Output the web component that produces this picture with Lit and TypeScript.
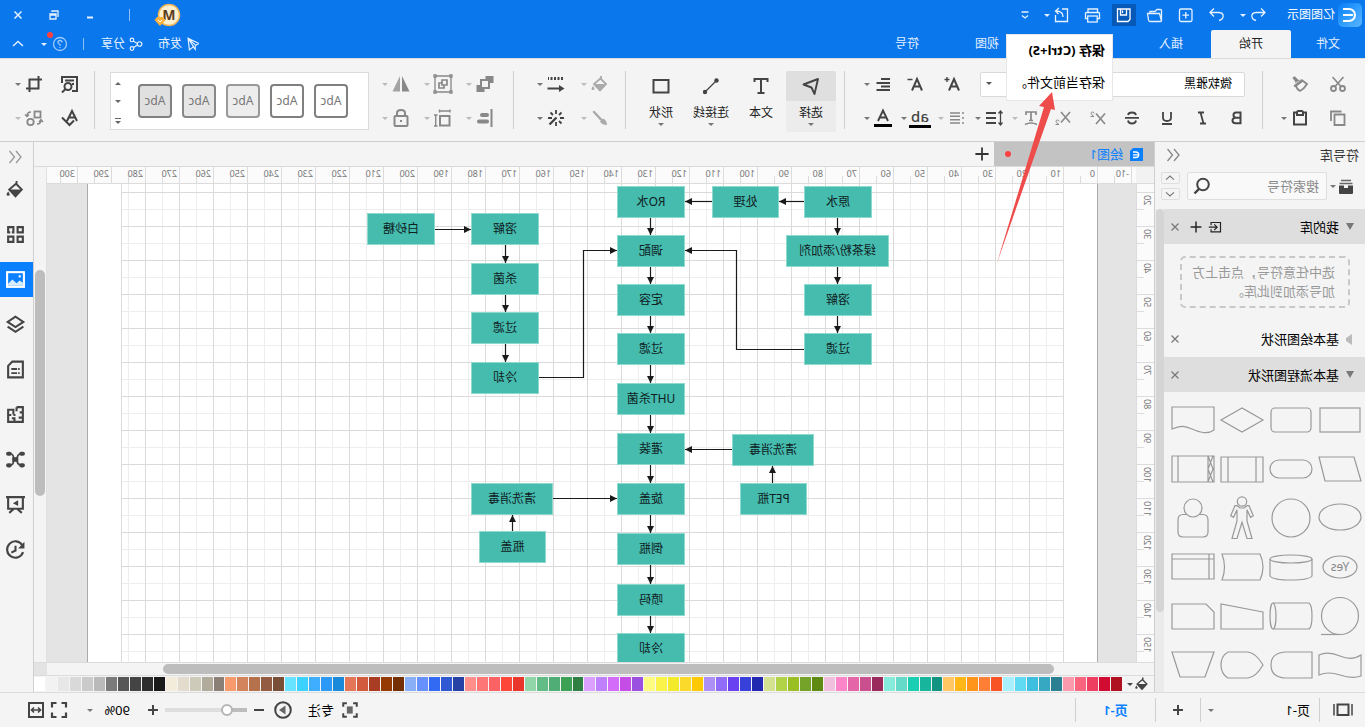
import { LitElement, html, svg, css, nothing, TemplateResult } from "lit";
import { customElement } from "lit/decorators.js";

const ico = (body: unknown, size = 20, box = 20) =>
  html`<svg class="ico" width=${size} height=${size} viewBox="0 0 ${box} ${box}" aria-hidden="true">${body}</svg>`;

const I: Record<string, TemplateResult> = {
  undo: svg`<path d="M7 3.5L3 7.5L7 11.5M3.5 7.5H12C18 8 17 14.500 12 15.500"/>`,
  redo: svg`<path d="M13 3.5L17 7.5L13 11.500M16.500 7.500H8C2 8 3 14.500 8 15.500"/>`,
  fresh: svg`<rect x="4" y="4" width="12.500" height="12.500" rx="1.500"/><path d="M10.200 7V13.500M7 10.200H13.500"/>`,
  open: svg`<path d="M3.500 16V5.500Q3.500 4.500 4.500 4.500H8L10 6.500H15V8.500M3.500 16L5.500 8.500H17.500L16.500 15Q16.300 16.500 15 16.500H4.500Q3.500 16.500 3.500 15.500"/>`,
  save: svg`<path d="M4.500 4H16.500V16.500H6L4 14.500V4Z"/><path d="M7.500 4V10H13.500V4M11.500 5.500V8"/>`,
  print: svg`<path d="M5.500 7.500V4H15V7.500M5.500 13.500H3.500V8.500Q3.500 7.500 4.500 7.500H16.500Q17.500 7.500 17.500 8.500V13.500H15.500"/><rect x="5.800" y="11" width="9.500" height="6"/>`,
  exp: svg`<path d="M10 4H4.500V16.500H16.500V10"/><path d="M9 12C9 8 11.500 6 16 6M13 3L16.500 6L13.500 9"/>`,
  more: svg`<path d="M6.500 7H13.500M7 10.500L10 13L13 10.500"/>`,
  min: svg`<path stroke-width="2" d="M7 12.500H13"/>`,
  restore: svg`<path d="M6 12V6H12V7M8 9H14V14H8ZM8 10H14" transform="translate(0 0)"/>`,
  close: svg`<path stroke-width="1.500" d="M6.500 6.500L13.500 13.500M13.500 6.500L6.500 13.500"/>`,
  send: svg`<path d="M3.500 9.500L15.500 3.500L14 16.500L9.500 13L15.500 3.500L7 11.500L3.500 9.500M7.500 12V16L9.500 13.500"/>`,
  share: svg`<circle cx="6" cy="10" r="2.500"/><circle cx="14.500" cy="5.500" r="2"/><circle cx="14.500" cy="15" r="2"/><path d="M8.500 9.500L11 8L13 6.500M8.500 11L12.700 14"/>`,
  help: svg`<circle cx="10" cy="10" r="6.500"/><path d="M8 8.500Q8 6.500 10 6.500T12 8.500Q12 9.500 10 10.500V12M10 13V14"/>`,
  up: svg`<path stroke-width="1.400" d="M5 12L10 7.500L15 12"/>`,
  cut: svg`<circle cx="5.500" cy="14.500" r="2.500" stroke-width="1.800"/><circle cx="14.500" cy="14.500" r="2.500" stroke-width="1.800"/><path stroke-width="1.600" d="M4.500 3L13 12.500M15.500 3L7 12.500"/>`,
  brush: svg`<path fill="currentColor" stroke="none" d="M11.500 6L15 2.500Q17 2 17.500 4L14.500 8L15.500 9.500L9 5.500ZM8 5L16.500 11.500L15 13.500L6 7Z"/><path stroke-width="1.800" d="M7 7L3 10Q6 15 10 17Q13 15.500 14 12"/>`,
  copy: svg`<path stroke-width="1.800" d="M17 13V3.500H6.500M3.500 6.500H13.500V17H3.500Z"/>`,
  paste: svg`<path stroke-width="2" d="M7 4.500H4V16.500H16V4.500H13M7 4.500Q7 3 8.500 3H11.500Q13 3 13 4.500V7H7Z"/>`,
  bold: svg`<path stroke-width="2" d="M6.500 4.500H11Q13.500 4.500 13.500 7T11 9.700H6.500ZM6.500 9.700H11.500Q14.500 9.700 14.500 12.500T11.500 15.300H6.500Z"/>`,
  italic: svg`<path stroke-width="1.800" d="M8 4.500H14M6 15.500H12M11.500 4.500L8.500 15.500"/>`,
  under: svg`<path stroke-width="1.800" d="M6 4V9.500Q6 13 10 13T14 9.500V4M5 16H15"/>`,
  strike: svg`<path stroke-width="1.800" d="M14 7Q13.500 4.500 10 4.500T6 7.200M6 12.500Q6.500 15.500 10 15.500T14 12.500M3 9.900H17"/>`,
  biggest: svg`<path stroke-width="2" d="M3 16.500L8 5L13 16.500M5 12.500H11"/><path stroke-width="1.400" d="M12.500 5.500H17.500M15 3V8"/>`,
  smaller: svg`<path stroke-width="2" d="M3 16.500L8 5L13 16.500M5 12.500H11"/><path stroke-width="1.500" d="M12.500 5.500H17.500"/>`,
  sup: svg`<path stroke-width="1.600" d="M2 5.500L11 16M11 5.500L2 16"/><path stroke-width="1" d="M13 5.500Q13 4 14.500 4T16 5.500Q16 6.500 13 8.500H16.500"/>`,
  sub: svg`<path stroke-width="1.600" d="M2 4L11 14.500M11 4L2 14.500"/><path stroke-width="1" d="M13 13.500Q13 12 14.500 12T16 13.500Q16 14.500 13 16.500H16.500"/>`,
  align: svg`<path stroke-width="2" d="M3 5H12M3 9H16.500M3 12.500H12M3 16H16.500"/>`,
  tcurve: svg`<path stroke-width="1.700" d="M5 7V4H15V7M10 4V12.500M8 12.500H12M4 16.500Q10 13.500 16 16.500"/>`,
  spacing: svg`<path stroke-width="2" d="M8 5H18M8 10H18M8 15H18"/><path stroke-width="1.300" d="M3.500 3V17M1.500 5.500L3.500 3L5.500 5.500M1.500 14.500L3.500 17L5.500 14.500"/>`,
  list: svg`<path stroke-width="1.500" d="M3 5H5M3 10H5M3 15H5M7 5H17M7 8.300H17M7 11.700H17M7 15H17"/>`,
  fontcol: svg`<path stroke-width="1.900" d="M5 13L10 2.500L15 13M7 9.500H13"/><path stroke="#000" stroke-width="3" d="M1 17.500H19"/>`,
  pointer: svg`<path stroke-width="1.900" stroke-linejoin="round" d="M17.500 8.500L3 3L6.500 18L9.500 11.500Z"/>`,
  text: svg`<path stroke-width="2" d="M3.500 6V3H16.500V6M10 3V17M6.500 17H13.500"/>`,
  conn: svg`<circle cx="16" cy="16" r="2.200" fill="currentColor" stroke="none"/><circle cx="4.500" cy="4.500" r="2.200" fill="currentColor" stroke="none"/><path d="M16 16L4.500 4.500"/>`,
  square: svg`<rect x="2.500" y="4" width="15" height="12.500" stroke-width="2"/>`,
  bucket: svg`<path stroke-width="1.800" d="M9 2V6M9 4L16 10L10 16.500L4 10L9.500 4.500"/><path fill="currentColor" stroke="none" d="M4 10H16.500L10 17Z"/><path fill="currentColor" stroke="none" d="M17 12Q20 16 17 16T17 12"/>`,
  linest: svg`<path stroke-width="3" stroke-dasharray="2 1.500" d="M3 4.500H18"/><path stroke-width="2" d="M5 14.500H18.500"/><path fill="currentColor" stroke="none" d="M7 11L1.500 14.500L7 18Z"/>`,
  pen: svg`<path stroke-width="2.500" stroke-linecap="round" d="M16 4L9 11.500"/><path fill="currentColor" stroke="none" d="M3 17Q3 12 7 10.500L10 13.500Q8 17 3 17"/>`,
  wand: svg`<path stroke-width="2.300" d="M9.500 9.500L16.500 16.500"/><path stroke-width="1.800" d="M10 2V6M10 14V18M2 10H6M14 10H18M4.500 4.500L7 7M15.500 4.500L13 7M4.500 15.500L7 13"/>`,
  layers: svg`<path fill="currentColor" stroke="none" d="M1.500 2H9.500V5H6V9H1.500ZM18.500 18H10.500V15H14V11H18.500Z"/><rect x="6" y="6" width="8" height="8" stroke-width="2"/>`,
  group: svg`<path d="M2 2H18V18H2Z"/><path stroke-width="1.700" d="M6 6H11V11H6ZM11 9H14V14H9V11"/><path fill="#f4f4f4" d="M1 1H3V3H1ZM17 1H19V3H17ZM1 17H3V19H1ZM17 17H19V19H17Z"/>`,
  mirror: svg`<path fill="currentColor" stroke="none" d="M9 2V17.500H1.500Z"/><path fill="currentColor" stroke="none" opacity=".75" d="M11 2V17.500H18.500Z"/>`,
  alignl: svg`<path stroke-width="2" d="M3.500 1V19"/><path stroke-width="4" stroke-linecap="round" d="M8 7H13M8 13.500H16"/>`,
  size: svg`<rect x="3.500" y="8" width="9.500" height="9.500" stroke-width="2"/><path stroke-width="1.400" d="M3 1.500V4.500M13.500 1.500V4.500M3 3H13.500M15.500 7H19M15.500 18H19M17.300 7V18"/>`,
  lock: svg`<rect x="3.500" y="8" width="13" height="10" rx="1" stroke-width="2"/><path stroke-width="2" d="M6 8V5Q6 2 10 2T14 5V8"/><path stroke-width="2" d="M9 13H11"/>`,
  find: svg`<path stroke-width="2" d="M8 17H3V3H18V9M6 6.500H15M6 10H8"/><circle cx="12" cy="12.500" r="3.500" stroke-width="2"/><path stroke-width="2" d="M14.500 15L18 18.500"/>`,
  crop: svg`<path stroke-width="2" d="M5.500 2V14.500H18M2 5.500H14.500V18"/>`,
  spell: svg`<path stroke-width="2" d="M3 13L8 3L13 13M5 9.500H11M6 12.500L10.500 17L18 9.500"/>`,
  swap: svg`<rect x="3.500" y="3.500" width="6" height="6" stroke-width="1.800"/><circle cx="13.500" cy="14" r="3.200" stroke-width="1.800"/><path stroke-width="1.400" d="M13 4Q17 4 17 8M15 6.500L17 8.500L19 6.500M3 12Q3 16 7 16M1 14L3 11.500L5 14"/>`,
  tray: svg`<path fill="currentColor" stroke="none" d="M3 9.500H8V12H12V9.500H17V17Q17 18 16 18H4Q3 18 3 17Z"/><path stroke-width="1.500" opacity=".8" d="M3.500 7.500H16.500M5 4.500H15"/>`,
  magnify: svg`<circle cx="9" cy="8.500" r="5.800" stroke-width="2"/><path stroke-width="2.400" d="M13 12.800L17.500 17.500"/>`,
  imp: svg`<path stroke-width="1.300" d="M15.500 8V5H5V15.500H15.500V12.500M18 10.200H9M12 7L8.700 10.200L12 13.500"/>`,
  plus: svg`<path stroke-width="1.600" d="M10 4V16M4 10H16"/>`,
  x: svg`<path stroke-width="1.200" d="M6.500 6.500L13.500 13.500M13.500 6.500L6.500 13.500"/>`,
  dleft: svg`<path stroke-width="1.300" d="M9 4L4 10L9 16M15.500 4L10.500 10L15.500 16"/>`,
  apps: svg`<path stroke-width="2" d="M3 3H8V8H3ZM3 12H8V17H3ZM12 12H17V17H12Z"/><path stroke-width="2" d="M12 3H17V8H12Z" stroke-dasharray="12 1.500"/>`,
  image: svg`<rect x="2" y="3" width="16" height="14" stroke-width="2"/><path fill="currentColor" stroke="none" opacity=".85" d="M3 16V13L6 11L9 13.500L13 10L17 14V16Z"/><rect x="5" y="6" width="2" height="2" fill="currentColor" stroke="none"/>`,
  stack: svg`<path stroke-width="1.900" d="M10 2.500L17.500 7.500L10 12.500L2.500 7.500ZM2.500 12L10 17L17.500 12"/>`,
  page: svg`<path stroke-width="2" d="M3 2.500H13L17 6.500V17.500H3Z"/><path stroke-width="1.800" d="M6 9.500H7.500M8.500 9.500H14M6 13.500H7.500M8.500 13.500H14"/>`,
  floor: svg`<path stroke-width="2" d="M9 3H3V17H17V5.500H12V10M9 3V7M3 8H6M12 10.500H10M17 10.500H14M3 13H7M11 17V13.500H13.500"/>`,
  mind: svg`<rect x="8" y="8.500" width="4.500" height="3" fill="currentColor"/><path stroke-width="1.600" d="M5 4.500Q8 5 8.500 8.500M15 4.500Q12 5 11.800 8.500M5 15.500Q8 15 8.500 11.500M15 15.500Q12 15 11.800 11.500"/><path stroke-width="4" stroke-linecap="round" d="M3 4.500H4.500M15.500 4.500H17M3 15.500H4.500M15.500 15.500H17"/>`,
  present: svg`<path stroke-width="2" d="M1 3H19M3 3V14H17V3M8 14.500L4 18M12 14.500L16 18"/><path fill="currentColor" stroke="none" d="M7.500 6L12.500 8.800L7.500 11.500Z"/>`,
  history: svg`<path stroke-width="2" d="M3.500 6A7.800 7.800 0 1 1 2.800 12.500M10 6.500V11L14 13"/><path fill="currentColor" stroke="none" d="M1.500 2.500V9H7.500Z"/>`,
  pages: svg`<rect x="4.500" y="4.500" width="11" height="10.500" stroke-width="2"/><path stroke-width="1.500" d="M1 4V15.500M19 4V15.500"/>`,
  focus: svg`<path stroke-width="2.200" d="M2.500 6.500V2.500H6.500M13.500 2.500H17.500V6.500M17.500 13.500V17.500H13.500M6.500 17.500H2.500V13.500"/><rect x="7" y="6" width="6.500" height="8" fill="#666" stroke="none"/>`,
  play: svg`<circle cx="10" cy="10" r="7.800" stroke-width="2"/><path fill="#666" stroke="none" d="M7.500 5.500L14 10L7.500 14.500Z"/>`,
  minus: svg`<path stroke-width="2" d="M5 10H15"/>`,
  plusb: svg`<path stroke-width="2.200" d="M10 4.500V15.500M4.500 10H15.500"/>`,
  full: svg`<path stroke-width="2.200" d="M3 7.500V3H7.500M12.500 3H17V7.500M17 12.500V17H12.500M7.500 17H3V12.500"/>`,
  fitw: svg`<rect x="3" y="3" width="14" height="14" stroke-width="2"/><path stroke-width="1.600" d="M5.500 10H14.500M8 7.500L5.500 10L8 12.500M12 7.500L14.500 10L12 12.500"/>`,
};

const shapes: TemplateResult[] = [
  svg`<rect x="4" y="12" width="40" height="24"/>`,
  svg`<rect x="4" y="12" width="40" height="24" rx="4"/>`,
  svg`<path d="M24 12L45 24L24 36L3 24Z"/>`,
  svg`<path d="M3 11H45V33C36 29 32 30 25 33S10 39 3 34Z"/>`,
  svg`<path d="M10 12H45L39 36H3Z"/>`,
  svg`<rect x="3" y="15" width="42" height="18" rx="9"/>`,
  svg`<path d="M3 12H45V37H3ZM10 12V37M38 12V37"/>`,
  svg`<path d="M3 11H45V37H3ZM9 11V37M39 11V37M4 11L9 24L4 37M9 11L4 24L9 37"/>`,
  svg`<ellipse cx="24" cy="23" rx="21" ry="13"/>`,
  svg`<circle cx="24" cy="24" r="19"/>`,
  svg`<circle cx="24" cy="7.500" r="4.700"/><path d="M22 14L19 11.700H17L12.700 21.700L15.500 23.300L19 15.700V27L14 44.500H19L24 28.300L29 44.500H34L29 27V15.700L32.500 23.300L35.300 21.700L31 11.700H29L26 14Z"/>`,
  svg`<circle cx="24" cy="14" r="9"/><path d="M18 20.500H14Q9 20.500 9 26V38Q9 43 14 43H34Q39 43 39 38V26Q39 20.500 34 20.500H30"/>`,
  svg`<ellipse cx="24" cy="24" rx="17" ry="11"/><text x="24" y="28" text-anchor="middle">Yes</text>`,
  svg`<ellipse cx="24" cy="16" rx="21" ry="4"/><path d="M3 16V33Q6 37 24 37T45 33V16"/>`,
  svg`<path d="M6 11H44Q39 24 44 37H6Q0 24 6 11Z"/>`,
  svg`<path d="M3 11H45V36H3ZM3 16H45M8 11V36"/>`,
  svg`<circle cx="24" cy="24" r="18.500"/><path d="M24 42.500H43"/>`,
  svg`<ellipse cx="42" cy="24" rx="3" ry="13"/><path d="M42 11H6Q3 13 3 24T6 37H42"/>`,
  svg`<path d="M3 20L45 12V37H3Z"/>`,
  svg`<path d="M11 12H45V37H3V20Z"/>`,
  svg`<path d="M3 14Q12 20 24 15T45 14V34Q36 30 24 34T3 35Z"/>`,
  svg`<path d="M3 11H30Q44 12 44 24T30 37H3Z"/>`,
  svg`<path d="M3 24Q10 12 18 11H38Q45 15 45 24T38 37H18Q10 36 3 24Z"/>`,
  svg`<path d="M3 11H45L37 36H12Z"/>`,
];

const palette =
  "b01120 d00c33 ee3f60 f9647f fa9aac 2a7f90 37a8c2 3fbfdf 5fdaf2 a8f0ff f75324 ff7f37 ff951a ffb718 ffc663 129480 16b59c 19ceb2 66dac8 85ecdb 9b2a5c c94f8f e465a8 fb85c8 f0bfdb 5e8a12 75a228 9abf23 b2d248 d3e190 2129b0 3741d9 6a41f0 916cf8 ac90f5 fec900 fcda2b f2ea2a faf44a fefc80 9b50e0 c44de6 d36cf8 bf80fe dba0fe 2f7f43 3da155 50ad75 62bc85 90d6a9 e8372a fd4738 fa6264 ff7676 ff8f88 2642a5 2f58d2 336af3 6790ff 89b0f6 742f03 963a03 a93d23 d25b3e e47758 1989da 2b99f5 40aeff 3dd1ff 67e3ff 794e36 935b41 b4714c d4845d f79a6c 8a8076 b0ab9a cdcab9 e3dccc f4ecda 1a1a1a 2e2e2e 444444 575757 7a7a7a bababa cacaca d9d9d9 e7e7e7 f2f2f2 ffffff".split(" ");

// left, top, width, label
const nodes: [number, number, number, string][] = [
  [264, 2, 68, "原水"], [357, 2, 67, "处理"], [451, 2, 68, "RO水"],
  [247, 51, 103, "绿茶粉/添加剂"], [264, 100, 68, "溶解"], [264, 149, 68, "过滤"],
  [451, 51, 68, "调配"], [451, 100, 68, "定容"], [451, 149, 68, "过滤"],
  [451, 199, 68, "UHT杀菌"], [451, 249, 68, "灌装"], [451, 299, 68, "旋盖"],
  [451, 349, 68, "倒瓶"], [451, 400, 68, "喷码"], [451, 449, 68, "冷却"],
  [322, 250, 82, "清洗消毒"], [329, 299, 67, "PET瓶"],
  [701, 29, 68, "白砂糖"], [597, 29, 68, "溶解"], [597, 79, 68, "杀菌"],
  [597, 128, 68, "过滤"], [597, 178, 68, "冷却"],
  [583, 299, 82, "清洗消毒"], [590, 347, 67, "瓶盖"],
];

const links = [
  "M332 17.500H357", "M424 17.500H451", "M298.500 33V51", "M298.500 83V100", "M298.500 132V149",
  "M485.500 33V51", "M485.500 83V100", "M485.500 132V149", "M485.500 181V199", "M485.500 231V249",
  "M485.500 281V299", "M485.500 331V349", "M485.500 381V400", "M485.500 432V449",
  "M332 165.500H399.500V66.500H451", "M404 265.500H451", "M363.500 299V282",
  "M701 45.500H665", "M630.500 61V79", "M630.500 111V128", "M630.500 160V178",
  "M597 193.500H552.500V66.500H519", "M583 314.500H519", "M623.500 347V331",
];

const range = (a: number, b: number) => Array.from({ length: (b - a) / 10 + 1 }, (_, i) => a + i * 10);

@customElement("app-root")
export class AppRoot extends LitElement {
  static styles = css`
    :host {
      display: flex; flex-direction: column; position: relative;
      height: 100vh; overflow: hidden; transform: scaleX(-1);
      background: #f4f4f4; color: #222;
      font: 13px/18px "Noto Sans", "Noto Sans CJK SC", sans-serif;
    }
    * { box-sizing: border-box; }
    button, select, input { font: inherit; color: inherit; margin: 0; }
    button { display: flex; align-items: center; justify-content: center; padding: 0; border: 0; background: none; flex: none; }
    a { color: inherit; text-decoration: none; }
    .ico { display: block; flex: none; fill: none; stroke: currentColor; stroke-width: 1.3; overflow: visible; }
    .caret { flex: none; display: block; width: 0; height: 0; border: 3px solid transparent; border-top-color: currentColor; border-bottom: 0; }
    .row { display: flex; align-items: center; }
    .push { margin-left: auto; }

    .head { background: #0a77ec; color: #e6f1ff; font-size: 12px; }
    .title { height: 30px; padding-left: 3px; gap: 7px; }
    .logo { display: block; }
    .brand { margin: 0 10px 0 -4px; color: #fff; }
    .tb { width: 24px; height: 22px; }
    .pair { width: 34px; }
    .save { background: #0759b8; color: #fff; border-radius: 1px; }
    .win { gap: 0; align-self: stretch; }
    .wbtn { width: 36px; height: 28px; }
    .avatar { display: block; margin-right: 24px; }
    .bar { width: 1px; height: 12px; background: #8fc1f7; }
    .win .bar { margin-right: 21px; }
    .tabs { height: 28px; align-items: stretch; }
    .tab { width: 80px; display: flex; align-items: center; justify-content: center; }
    .tab.first { width: 74px; }
    .tab.on { background: #f4f4f4; color: #222; border-radius: 2px 2px 0 0; }
    .tab.gap { margin-left: 104px; }
    .acts { color: #e6f1ff; }
    .act { gap: 2px; margin-right: 13px; }
    .acts .bar { margin: 0 13px 0 4px; }
    .help { position: relative; width: 34px; justify-content: flex-start; gap: 3px; color: #9bc9fb; }
    .help .caret { color: #e6f1ff; }
    .dot { position: absolute; left: 17px; top: -2px; width: 6px; height: 6px; border-radius: 50%; background: #ff4040; }

    .ribbon { display: flex; height: 84px; border-top: 1px solid #dcdcdc; border-bottom: 1px solid #cfcfcf; padding-top: 12px; color: #444; }
    .grp { display: flex; flex-direction: column; gap: 8px; flex: none; }
    .line { display: flex; align-items: center; height: 26px; }
    .sep { flex: none; width: 1px; height: 58px; background: #cfcfcf; }
    .tool { height: 26px; justify-content: flex-start; }
    .tool .face { width: 22px; display: flex; justify-content: center; }
    .tool .caret { margin-left: 2px; color: #777; }
    .g { color: #888; } .d { color: #aaa; }
    .tool.g .caret, .tool.d .caret { color: #bbb; }
    .w38 { width: 38px; } .w37 { width: 37px; } .w44 { width: 44px; } .w42 { width: 42px; } .w36 { width: 36px; }
    .w35 { width: 35px; justify-content: center; } .mid { justify-content: center; }
    .g1 { padding: 0 10px 0 16px; } .g2 { padding: 0 12px 0 7px; } .g4 { padding: 0 9px 0 14px; }
    .g5 { padding: 0 1px 0 17px; } .g6 { padding-left: 13px; }
    .tail { padding-left: 3px; display: flex; }
    .combo { position: relative; height: 25px; margin: 0 6px 0 10px; display: flex; }
    .sel { appearance: none; height: 25px; border: 1px solid #d9d9d9; background: #fff; border-radius: 2px; color: #000; font-size: 12px; line-height: 18px; }
    .fam { width: 180px; padding: 0 12px; } .num { width: 80px; margin-left: 5px; }
    .combo .caret { position: absolute; right: 6px; top: 10px; color: #555; }
    .ab { font-size: 15px; line-height: 16px; font-weight: 500; border-bottom: 3px solid #000; height: 20px; }
    .g3 { display: flex; padding: 0 10px 0 8px; }
    .big { width: 50px; height: 61px; flex-direction: column; font-size: 12px; justify-content: flex-start; border-radius: 2px; overflow: hidden; color: #222; white-space: nowrap; }
    .big .top { height: 30px; align-self: stretch; display: flex; align-items: center; justify-content: center; color: #444; }
    .big .lbl { height: 22px; line-height: 24px; }
    .big .caret { color: #777; }
    .big.on { background: #ececec; } .big.on .top { background: #dfdfdf; }
    .gallery { width: 259px; height: 58px; margin: 1px 15px 0 0; padding-left: 20px; display: flex; align-items: center; gap: 10px; background: #fff; border: 1px solid #dcdcdc; flex: none; }
    .style { width: 34px; height: 34px; border: 2px solid #808080; border-radius: 4px; background: #fff; font-size: 12px; color: #777; }
    .style.s3 { background: #ededed; border-color: #999; } .style.s4 { background: #e6e6e6; border-color: #888; } .style.s5 { background: #e0e0e0; }
    .spin { margin-left: auto; width: 15px; height: 46px; padding-top: 4px; display: flex; flex-direction: column; justify-content: space-between; align-items: center; color: #666; }
    .flip { transform: scaleY(-1); }
    .bottom { border-top: 1px solid #666; padding-top: 2px; }

    .body { flex: 1; min-height: 0; display: grid; grid-template-columns: 211px 1fr 34px; }
    .lib { border-right: 1px solid #cfcfcf; display: flex; flex-direction: column; min-width: 0; min-height: 0; }
    .libhead { height: 26px; padding: 0 8px 0 6px; color: #333; }
    .libhead button { color: #888; width: 20px; }
    .find { height: 41px; padding: 4px 6px 9px 9px; color: #444; }
    .find > .caret { color: #777; }
    .search { flex: 1; min-width: 0; display: flex; align-items: center; height: 28px; margin: 0 7px 0 3px; border: 1px solid #dedede; border-radius: 2px; background: #f9f9f9; padding: 0 4px 0 7px; }
    .search input { flex: 1; width: 0; min-width: 0; border: 0; padding: 0; background: none; outline: 0; }
    .search input::placeholder { color: #8a8a8a; opacity: 1; }
    .step { display: flex; flex-direction: column; gap: 4px; }
    .step button { width: 19px; height: 12px; border: 1px solid #dedede; border-radius: 2px; color: #777; overflow: hidden; }
    .scroll { flex: 1; min-height: 0; display: flex; overflow: hidden; }
    .sections { flex: 1; min-width: 0; }
    .track { width: 9px; background: #ebebeb; }
    .thumb { height: 403px; width: 8px; background: #d5d5d5; border-radius: 4px; }
    .sect { display: flex; align-items: center; height: 36px; padding: 0 0 0 11px; color: #000; }
    .sect.dark { background: #dedede; height: 35px; }
    .tri { width: 0; height: 0; border: 4px solid transparent; border-top: 7px solid #777; border-bottom: 0; margin-right: 7px; }
    .tri.side { border: 4px solid transparent; border-left: 6px solid #bbb; border-right: 0; margin: 0 7px 0 2px; }
    .sect .push { display: flex; }
    .sect button { width: 20px; color: #222; } .sect .x { color: #777; width: 22px; }
    .drop { width: 170px; height: 52px; margin: 12px 15px 13px; border: 2px dashed #c8c8c8; border-radius: 5px; padding: 5px 8px 0 13px; color: #999; line-height: 19px; }
    .shapes { display: grid; grid-template-columns: repeat(4, 49px); grid-auto-rows: 49px; padding: 4px 0 0 1px; }
    .shapes svg { fill: none; stroke: #999; stroke-width: 1.200; }
    .shapes text { fill: #888; stroke: none; font-size: 12px; }

    .main { display: flex; flex-direction: column; min-width: 0; min-height: 0; }
    .files { height: 25px; border-bottom: 1px solid #dadada; flex: none; }
    .file { width: 160px; height: 24px; background: #c3c3c3; padding: 0 11px; color: #0a80ff; gap: 7px; }
    .red { width: 6px; height: 6px; border-radius: 50%; background: #ff4040; }
    .files button { width: 24px; color: #333; }
    .work { flex: 1; min-height: 0; display: grid; grid-template: 17px 1fr / 18px 1fr 13px; }
    .corner { background: #f2f2f2; border-bottom: 1px solid #dcdcdc; }
    .hr { display: flex; overflow: hidden; padding-left: 4px; background: #fbfbfb; border-bottom: 1px solid #dcdcdc; font-size: 9px; line-height: 14px; color: #777; }
    .hr span { flex: none; width: 34px; padding-left: 2px; border-left: 1px solid #dcdcdc; background: linear-gradient(#dcdcdc, #dcdcdc) 16px 100% / 1px 7px no-repeat; }
    .vr { overflow: hidden; padding-top: 8px; background: #fbfbfb; border-right: 1px solid #dcdcdc; font-size: 9px; line-height: 14px; color: #777; }
    .vr span { display: block; height: 34px; padding: 2px 0 0; border-top: 1px solid #dcdcdc; background: linear-gradient(#dcdcdc, #dcdcdc) 100% 16px / 7px 1px no-repeat; }
    .vr b { display: block; width: 14px; height: fit-content; font-weight: 400; writing-mode: vertical-rl; transform: rotate(180deg); }
    .canvas { position: relative; overflow: hidden; background: #e4e4e4; }
    .sheet { position: absolute; left: 38px; top: 0; bottom: 0; width: 1011px; background: #fff; border: solid #aaa; border-width: 0 1px; }
    .grid { position: absolute; left: 72px; top: 0; bottom: 0; width: 943px; border-right: 1px solid #dcdcdc;
      background:
        linear-gradient(90deg, #dadada 1px, transparent 1px) 0 0 / 34px 34px,
        linear-gradient(#dadada 1px, transparent 1px) 0 8px / 34px 34px,
        linear-gradient(90deg, #eee 1px, transparent 1px) 17px 0 / 34px 34px,
        linear-gradient(#eee 1px, transparent 1px) 0 25px / 34px 34px; }
    .wires { position: absolute; inset: 0; width: 100%; height: 100%; fill: none; stroke: #1a1a1a; stroke-width: 1.200; }
    .node { position: absolute; height: 32px; display: flex; align-items: center; justify-content: center; background: #45bcae; border: 1px solid #8fdacf; font-size: 12px; color: #10201e; white-space: nowrap; }
    .vs { grid-row: 1 / 3; grid-column: 3; border-left: 1px solid #e0e0e0; padding: 103px 1px 0; }
    .vs i { display: block; width: 10px; height: 226px; border-radius: 5px; background: #bdbdbd; }
    .hs { flex: none; display: flex; justify-content: space-between; height: 14px; border: solid #dcdcdc; border-width: 1px 0; }
    .hs i { width: 891px; height: 10px; margin: 1px 0 0 100px; border-radius: 5px; background: #bdbdbd; }
    .hs b { width: 13px; background: #e3e3e3; }
    .colors { flex: none; display: flex; height: 16px; padding: 1px 0; }
    .pick { width: 32px; color: #444; gap: 1px; padding-left: 4px; justify-content: flex-start; overflow: visible; }
    .sw { flex: 1; display: grid; grid-template-columns: repeat(91, 1fr); gap: 1px; }

    .side { border-left: 1px solid #cfcfcf; display: flex; flex-direction: column; color: #444; padding-top: 3px; }
    .side button { height: 35px; margin-bottom: 10px; padding-left: 2px; }
    .side .fold { height: 24px; margin-bottom: 3px; color: #999; }
    .side .on { background: #0a80ff; color: #fff; }

    .status { flex: none; height: 35px; border-top: 1px solid #dcdcdc; color: #444; }
    .status .v { width: 1px; height: 24px; background: #d0d0d0; }
    .pv { width: 45px; padding-right: 2px; }
    .pgs { appearance: none; border: 0; background: none; width: 70px; padding: 0 0 0 9px; color: #000; }
    .pgwrap { width: 118px; gap: 35px; } .pgwrap .caret { color: #777; }
    .add { width: 44px; } .pg { width: 79px; text-align: center; color: #0a80ff; font-weight: 600; }
    .zoomer { color: #444; padding-right: 26px; }
    .foc { gap: 7px; color: #000; margin-right: 15px; } .foc .ico { color: #444; }
    .pm { width: 20px; } .pm.out { margin-left: 4px; }
    .pct { width: 50px; padding-left: 13px; color: #000; } .zoomer .caret { color: #777; }
    .range { appearance: none; width: 82px; height: 12px; margin: 0 2px; background: linear-gradient(90deg, #bdbdbd 20px, #dedede 20px) 0 4px / 100% 4px no-repeat; border-radius: 2px; }
    .range::-webkit-slider-thumb { appearance: none; width: 12px; height: 12px; border-radius: 50%; background: #fff; border: 2px solid #b5b5b5; }
    .end { gap: 3px; margin-left: 18px; }

    .tip { position: absolute; left: 252px; top: 34px; width: 107px; height: 67px; background: #fff; border: 1px solid #e6e6e6; padding: 7px 0 0 7px; color: #000; white-space: nowrap; }
    .tip b { display: block; margin-bottom: 14px; line-height: 17px; }
    .mark { position: absolute; left: 300px; top: 85px; width: 80px; height: 185px; fill: #ee4b4b; }
  `;

  tool(name: string, cls = "", caret = false, label = name, size = 20) {
    return html`<button class="tool ${cls}" aria-label=${label}><span class="face">${ico(I[name], size)}</span>${caret ? html`<span class="caret"></span>` : nothing}</button>`;
  }

  big(name: string, label: string, caret = true, on = false) {
    return html`<button class="big ${on ? "on" : ""}"><span class="top">${ico(I[name])}</span><span class="lbl">${label}</span>${caret ? html`<span class="caret"></span>` : nothing}</button>`;
  }

  header() {
    const t = (n: string, c = "") => html`<button class="tb ${c}" aria-label=${n}>${ico(I[n])}</button>`;
    return html`<header class="head">
      <div class="row title">
        <svg class="logo" width="24" height="24" viewBox="0 0 24 24" aria-hidden="true">
          <defs><linearGradient id="lg" x1="1" y1="0" x2="0" y2="1"><stop offset="0" stop-color="#0a7cf5"/><stop offset=".5" stop-color="#2f9dff"/><stop offset="1" stop-color="#5ab4ff"/></linearGradient></defs>
          <rect width="24" height="24" rx="5" fill="url(#lg)"/>
          <path d="M19 6H13A6 6 0 0 0 13 18H19M9 12H19" fill="none" stroke="#fff" stroke-width="2"/>
        </svg>
        <span class="brand">亿图图示</span>
        <div class="row pair">${t("undo")}<span class="caret"></span></div>
        ${t("redo")}${t("fresh")}${t("open")}${t("save", "save")}${t("print")}
        <div class="row">${t("exp")}<span class="caret"></span></div>
        ${t("more")}
        <div class="row win push">
          <svg class="avatar" width="27" height="24" viewBox="0 0 27 24" role="img" aria-label="M">
            <circle cx="12" cy="12" r="10.500" fill="#fdf0cf" stroke="#f3b556" stroke-width="1.500"/>
            <text x="12" y="17" text-anchor="middle" font-size="14" font-weight="700" fill="#5c3d1e">M</text>
            <path d="M18 14H24L26.500 17L21 23L15.500 17Z" fill="#fbb03b"/><path d="M19 17L21 19L23 17" fill="none" stroke="#fff"/>
          </svg>
          <span class="bar"></span>
          <button class="wbtn" aria-label="min">${ico(I.min)}</button>
          <button class="wbtn" aria-label="restore">${ico(I.restore)}</button>
          <button class="wbtn" aria-label="close">${ico(I.close)}</button>
        </div>
      </div>
      <nav class="row tabs">
        <a class="tab first" href="#">文件</a><a class="tab on" href="#">开始</a><a class="tab" href="#">插入</a>
        <a class="tab gap" href="#">视图</a><a class="tab" href="#">符号</a>
        <div class="row acts push">
          <button class="act">${ico(I.send, 18)}发布</button>
          <button class="act">${ico(I.share, 18)}分享</button>
          <span class="bar"></span>
          <button class="help" aria-label="help">${ico(I.help, 20)}<span class="dot"></span><span class="caret"></span></button>
          <button class="wbtn" aria-label="fold">${ico(I.up)}</button>
        </div>
      </nav>
    </header>`;
  }

  ribbon() {
    return html`<div class="ribbon">
      <div class="grp g1">
        <div class="line">${this.tool("cut", "w38 g")}${this.tool("brush", "w38 g")}</div>
        <div class="line">${this.tool("copy", "w38 g")}${this.tool("paste", "w38", true)}</div>
      </div><span class="sep"></span>
      <div class="grp g2">
        <div class="line">
          <div class="combo">
            <select class="sel fam" aria-label="字体"><option>微软雅黑</option></select>
            <select class="sel num" aria-label="字号"><option></option></select><span class="caret"></span>
          </div>
          <span class="tail">${this.tool("biggest", "w37 mid")}${this.tool("smaller", "w37 mid")}</span>
          <span class="push">${this.tool("align", "w37", true)}</span>
        </div>
        <div class="line">
          ${["bold", "italic", "under", "strike"].map((n) => this.tool(n, "w35"))}
          ${["sup", "sub"].map((n) => this.tool(n, "w35 g"))}
          <span class="tail">${this.tool("tcurve", "w37 g", true)}${this.tool("spacing", "w37", true)}${this.tool("list", "w37 g", true)}
          <button class="tool w37"><span class="face ab">ab</span><span class="caret"></span></button>
          ${this.tool("fontcol", "w37", true)}</span>
        </div>
      </div><span class="sep"></span>
      <div class="g3">
        ${this.big("pointer", "选择", true, true)}${this.big("text", "文本", false)}${this.big("conn", "连接线")}${this.big("square", "形状")}
      </div><span class="sep"></span>
      <div class="grp g4">
        <div class="line">${this.tool("bucket", "w44 d", true, "fill")}${this.tool("linest", "w44", true)}</div>
        <div class="line">${this.tool("pen", "w44 d", true, "line")}${this.tool("wand", "w44", true)}</div>
      </div><span class="sep"></span>
      <div class="grp g5">
        <div class="line">${this.tool("layers", "w42 g", true)}${this.tool("group", "w42 g", true)}${this.tool("mirror", "w42 g", true)}</div>
        <div class="line">${this.tool("alignl", "w42 g", true)}${this.tool("size", "w42 g", true)}${this.tool("lock", "w42 g", true)}</div>
      </div>
      <div class="gallery">
        ${["", "", "s3", "s4", "s5"].map((c) => html`<button class="style ${c}">Abc</button>`)}
        <div class="spin"><span class="caret flip"></span><span class="caret"></span><span class="bottom"><span class="caret"></span></span></div>
      </div><span class="sep"></span>
      <div class="grp g6">
        <div class="line">${this.tool("find", "w36")}${this.tool("crop", "w36", true)}</div>
        <div class="line">${this.tool("spell", "w36")}${this.tool("swap", "w36 g", true)}</div>
      </div>
    </div>`;
  }

  library() {
    const sm = (n: string, c = "", s = 20) => html`<button class=${c} aria-label=${n}>${ico(I[n], s)}</button>`;
    return html`<aside class="lib">
      <div class="row libhead">符号库<span class="push">${sm("dleft")}</span></div>
      <div class="row find">
        ${ico(I.tray)}<span class="caret"></span>
        <label class="search"><input aria-label="搜索符号" placeholder="搜索符号" />${ico(I.magnify)}</label>
        <div class="step"><button aria-label="prev">${ico(I.up, 16)}</button><button aria-label="next"><span class="flip">${ico(I.up, 16)}</span></button></div>
      </div>
      <div class="scroll">
        <div class="sections">
          <div class="sect dark"><span class="tri"></span>我的库<span class="push">${sm("imp", "", 18)}${sm("plus", "", 18)}${sm("x", "x")}</span></div>
          <div class="drop">选中任意符号，点击上方加号添加到此库。</div>
          <div class="sect"><span class="tri side"></span>基本绘图形状<span class="push">${sm("x", "x")}</span></div>
          <div class="sect dark"><span class="tri"></span>基本流程图形状<span class="push">${sm("x", "x")}</span></div>
          <div class="shapes">${shapes.map((s) => html`<svg width="48" height="48" viewBox="0 0 48 48">${s}</svg>`)}</div>
        </div>
        <div class="track"><div class="thumb"></div></div>
      </div>
    </aside>`;
  }

  main() {
    return html`<main class="main">
      <div class="row files">
        <div class="row file">
          <svg width="13" height="13" viewBox="0 0 13 13" aria-hidden="true"><path d="M0 0H10L13 3V13H0Z" fill="#0a80ff"/><path d="M10 4H7A2.500 2.500 0 0 0 7 9.500H10M5 6.800H10" fill="none" stroke="#fff" stroke-width="1.300"/></svg>
          <span>绘图1</span><span class="red push"></span>
        </div>
        <button aria-label="新建">${ico(I.plus, 22)}</button>
      </div>
      <div class="work">
        <div class="corner"></div>
        <div class="hr">${range(-10, 300).map((n) => html`<span>${n}</span>`)}</div>
        <div class="vr">${range(20, 150).map((n) => html`<span><b>${n}</b></span>`)}</div>
        <div class="canvas">
          <div class="sheet"></div><div class="grid"></div>
          <svg class="wires" aria-hidden="true">
            <defs><marker id="arr" markerUnits="userSpaceOnUse" markerWidth="8" markerHeight="8" refX="7" refY="3.500" orient="auto"><path d="M0 0L7 3.500L0 7Z" fill="#1a1a1a" stroke="none"/></marker></defs>
            ${links.map((d) => svg`<path d=${d} marker-end="url(#arr)"/>`)}
          </svg>
          ${nodes.map(([l, t, w, s]) => html`<div class="node" style="left:${l}px;top:${t}px;width:${w}px">${s}</div>`)}
        </div>
        <div class="vs"><i></i></div>
      </div>
      <div class="hs"><i></i><b></b></div>
      <div class="colors">
        <button class="pick" aria-label="填充">${ico(I.bucket, 16)}<span class="caret"></span></button>
        <div class="sw">${palette.map((c) => html`<span style="background:#${c}"></span>`)}</div>
      </div>
    </main>`;
  }

  render() {
    return html`${this.header()}${this.ribbon()}
      <div class="body">
        ${this.library()}${this.main()}
        <aside class="side">
          <button class="fold" aria-label="fold">${ico(I.dleft)}</button>
          ${["bucket", "apps", "image", "stack", "page", "floor", "mind", "present", "history"].map(
            (n) => html`<button class=${n === "image" ? "on" : ""} aria-label=${n}>${ico(I[n], 21)}</button>`
          )}
        </aside>
      </div>
      <footer class="row status">
        <button class="pv" aria-label="页面">${ico(I.pages)}</button><span class="v"></span>
        <div class="row pgwrap"><select class="pgs" aria-label="选择页"><option>页-1</option></select><span class="caret"></span></div>
        <span class="v"></span><button class="add" aria-label="add">${ico(I.plusb, 18)}</button><span class="v"></span>
        <a class="pg" href="#">页-1</a><span class="v"></span>
        <div class="row zoomer push">
          <button class="foc">${ico(I.focus, 18)}专注</button>
          <button class="pm" aria-label="play">${ico(I.play, 20)}</button>
          <button class="pm out" aria-label="minus">${ico(I.minus, 20)}</button>
          <input class="range" type="range" min="0" max="100" value="20" aria-label="缩放" />
          <button class="pm" aria-label="plus">${ico(I.plusb, 18)}</button>
          <span class="pct">90%</span><span class="caret"></span>
          <div class="row end"><button aria-label="full">${ico(I.full, 20)}</button><button aria-label="fit">${ico(I.fitw, 20)}</button></div>
        </div>
      </footer>
      <div class="tip" role="tooltip"><b>保存 (Ctrl+S)</b>保存当前文件。</div>
      <svg class="mark" viewBox="300 85 80 185" aria-hidden="true"><path d="M313 92L310 110L314 109L368 263L321 107L326 106Z"/></svg>`;
  }
}
